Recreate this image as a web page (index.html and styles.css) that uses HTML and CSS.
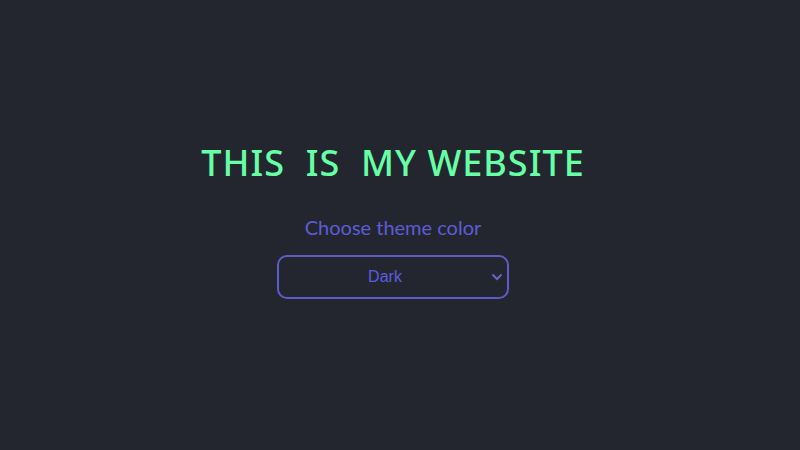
FILE: index.html
```html
<!DOCTYPE html>
<html lang="en">
<head>
<meta charset="utf-8">
<title>This is my website</title>
<link rel="stylesheet" href="styles.css">
</head>
<body>
<main class="page">
  <h1 class="title">THIS&nbsp; IS&nbsp; MY WEBSITE</h1>
  <label class="label" for="theme">Choose theme color</label>
  <div class="picker">
    <select class="select" id="theme">
      <option>Dark</option>
      <option>Light</option>
    </select>
    <svg class="chevron" viewBox="0 0 12 8" aria-hidden="true"><path d="M1.500 1.500 6 6l4.500-4.500"/></svg>
  </div>
</main>
</body>
</html>
```

FILE: styles.css
```css
* {
  box-sizing: border-box;
}

body {
  margin: 0;
  background: #24262f;
  color: #5c5cd6;
  font-family: Lato, sans-serif;
}

.page {
  display: flex;
  flex-direction: column;
  align-items: center;
  justify-content: center;
  min-height: 100vh;
  padding: 0 14px 12px 0;
}

.title {
  margin: 0 0 24px;
  color: #66ffa6;
  font-family: "Noto Sans", sans-serif;
  font-size: 36px;
  line-height: 48px;
  font-weight: 500;
  letter-spacing: 1px;
}

.label {
  margin-bottom: 12px;
  font-size: 20px;
  line-height: 32px;
}

.picker {
  position: relative;
  width: 232px;
  max-width: 100%;
}

.select {
  display: block;
  width: 100%;
  height: 44px;
  padding: 0 16px 2px 0;
  border: 2px solid #5c5cc8;
  border-radius: 10px;
  background: transparent;
  color: #5c5ce0;
  font-family: "Liberation Sans", sans-serif;
  font-size: 16px;
  text-align: center;
  text-align-last: center;
  appearance: none;
}

.chevron {
  position: absolute;
  top: 18px;
  right: 6px;
  width: 12px;
  height: 8px;
  fill: none;
  stroke: #6464cc;
  stroke-width: 2;
  pointer-events: none;
}
```
